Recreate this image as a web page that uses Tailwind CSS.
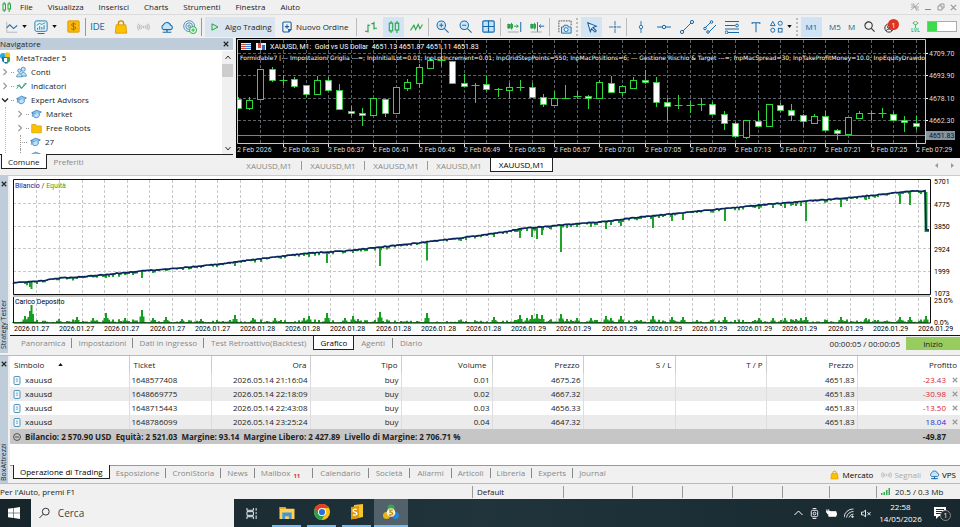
<!DOCTYPE html>
<html lang="it">
<head>
  <meta charset="UTF-8"/>
  <meta name="viewport" content="width=device-width, initial-scale=1.0"/>
  <title>MetaTrader 5</title>
  <script src="https://cdn.jsdelivr.net/npm/@tailwindcss/browser@4"></script>
</head>
<body class="bg-[#f0f0f0] text-[#222] font-['Open_Sans','Noto_Sans',sans-serif] text-[8px] leading-[14px] overflow-hidden">

  <!-- shared icons -->
  <svg class="hidden">
    <symbol id="cap" viewBox="0 0 16 16"><path d="M1 6 8 2.500l7 2.500-6 4z" fill="#8cc5ee" stroke="#1d6fb0"/><path d="M4 8v4c2 2 6 2 8-1V7M2 6v6" fill="#bfe0f7" stroke="#1d6fb0"/></symbol>
    <symbol id="bag" viewBox="0 0 16 16"><path d="M5 6V4a3 3 0 0 1 6 0v2" fill="none" stroke="#c98a00" stroke-width="1.500"/><path d="M2.500 5.500h11l1 9.500h-13z" fill="#fcc200" stroke="#d99a00"/></symbol>
    <symbol id="cloud" viewBox="0 0 16 16"><path d="M4 11a3 3 0 0 1 0-5.500 4.200 4.200 0 0 1 8 .5 2.600 2.600 0 0 1 .5 5z" fill="#c5e4fa" stroke="#1769aa" stroke-width="1.200"/><path d="M8 11v3M3 14h10M6.500 14h3" stroke="#1769aa" stroke-width="1.400"/></symbol>
    <symbol id="waves" viewBox="0 0 16 16"><g fill="none" stroke="#aaa"><circle cx="8" cy="8" r="1"/><path d="M5.500 5.500a4 4 0 0 0 0 5M10.500 5.500a4 4 0 0 1 0 5M3.500 4.500a6 6 0 0 0 0 7M12.500 4.500a6 6 0 0 1 0 7M1.500 3.500a8 8 0 0 0 0 9M14.500 3.500a8 8 0 0 1 0 9"/></g></symbol>
    <symbol id="doc" viewBox="0 0 12 14"><rect x="1.500" y="1" width="9" height="12" rx="1.500" fill="#eef7fc" stroke="#3d87b0" stroke-width="1.300"/><path d="M4.500 5h3M4.500 8h3" stroke="#3d87b0"/></symbol>
    <symbol id="down" viewBox="0 0 6 4"><path d="M0 0h6L3 4z" fill="#111"/></symbol>
    <symbol id="x" viewBox="0 0 8 8"><path d="m1 1 6 6M7 1 1 7" stroke="currentColor" stroke-width="1.500"/></symbol>
    <symbol id="chev" viewBox="0 0 8 8"><path d="m2.500 1 3 3-3 3" fill="none" stroke="#999" stroke-width="1.200"/></symbol>
  </svg>

  <header>
    <nav class="flex h-[15px] items-center border-b border-[#dcdcdc] pr-[3px]">
      <svg class="ml-[2px] mr-2 h-[10px] w-[10px]" viewBox="0 0 10 10" fill="none" stroke="#25a53c"><rect x="1" y="2" width="2.500" height="6"/><rect x="6" y="2" width="2.500" height="5"/><path d="M2.200 0v2M2.200 8v2M7.200 0v2M7.200 7v3"/></svg>
      <div class="flex gap-[15px]">
        <a href="#">File</a><a href="#">Visualizza</a><a href="#">Inserisci</a><a href="#">Charts</a><a href="#">Strumenti</a><a href="#">Finestra</a><a href="#">Aiuto</a>
      </div>
      <div class="ml-auto flex items-center gap-[5px] text-[#999]">
        <svg class="h-2 w-2" viewBox="0 0 8 8" stroke="#aaa" fill="none"><path d="M0 1l8 6M0 7l8-7M2 0l4 8M0 4h8"/></svg>
        <button aria-label="Riduci"><svg class="h-2 w-2" viewBox="0 0 8 8"><path d="M1 6.500h6" stroke="#888"/></svg></button>
        <button aria-label="Ripristina"><svg class="h-2 w-2" viewBox="0 0 8 8" fill="none" stroke="#999"><path d="M1 3h4v4H1zM3 3V1h4v4H5"/></svg></button>
        <button aria-label="Chiudi"><svg class="h-[7px] w-[7px]"><use href="#x"/></svg></button>
      </div>
    </nav>

    <div class="flex h-[23px] items-center overflow-hidden pl-[6px]">
      <button class="flex w-7 shrink-0 items-center gap-1" aria-label="Grafico"><svg class="h-3 w-3" viewBox="0 0 16 16" fill="none"><path d="M1 1v14h14" stroke="#aaa"/><path d="m1 9 4-4 5 5 5-4" stroke="#2a7ab8" stroke-width="1.500"/></svg><svg class="h-[3px] w-[5px]"><use href="#down"/></svg></button>
      <button class="flex w-7 shrink-0 items-center gap-1" aria-label="Modelli"><svg class="h-[14px] w-[14px]" viewBox="0 0 16 16" fill="none" stroke="#1d6fa8"><rect x="1" y="1" width="14" height="12" rx="2" fill="#e3f1fa"/><path d="M4 15.500h8" stroke-width="1.300"/><path d="m3 6 3-2 3 1 4-2" stroke="#2fa35a"/><path d="M4 11V9M6.500 11V7M9 11V8M11.500 11V6"/></svg><svg class="h-[3px] w-[5px]"><use href="#down"/></svg></button>
      <button class="flex w-[23px] shrink-0 justify-center" aria-label="Simboli"><svg class="h-[13px] w-[13px]" viewBox="0 0 16 16"><rect x="1" y="1" width="14" height="14" rx="1" fill="#fbb90b" stroke="#d99400"/><path d="M11 5.500C10 4 5.500 4 5.500 6S11 8 11 10s-4.500 2.200-6 .5M8 3v10" fill="none" stroke="#a86a00" stroke-width="1.200"/></svg></button>
      <span class="h-[18px] w-px shrink-0 bg-[#999]"></span>
      <button class="w-[23px] shrink-0 text-center font-['Lato',sans-serif] text-[9px] text-[#1d6fa8]">IDE</button>
      <button class="flex w-[23px] shrink-0 justify-center" aria-label="Mercato"><svg class="h-[14px] w-[14px]"><use href="#bag"/></svg></button>
      <button class="flex w-[23px] shrink-0 justify-center" aria-label="Segnali"><svg class="h-3 w-[13px]"><use href="#waves"/></svg></button>
      <button class="flex w-[23px] shrink-0 justify-center" aria-label="VPS"><svg class="h-[14px] w-[14px]"><use href="#cloud"/></svg></button>
      <button class="flex w-[23px] shrink-0 justify-center" aria-label="Copy trading"><svg class="h-[14px] w-[14px]" viewBox="0 0 16 16" fill="none" stroke="#3a86b8"><circle cx="7" cy="7" r="6.200"/><circle cx="7" cy="7" r="3.800"/><circle cx="7" cy="7" r="1.400"/><circle cx="11.500" cy="11.500" r="4" fill="#e8fae9" stroke="#1ca63a"/><path d="M11.500 9.500v4M9.500 11.500h4" stroke="#1ca63a"/></svg></button>
      <span class="mr-[3px] h-[18px] w-px shrink-0 bg-[#999]"></span>
      <button class="flex h-5 w-[70px] shrink-0 items-center gap-[6px] bg-[#dbe5ef] pl-[6px]"><svg class="h-[8px] w-[8px]" viewBox="0 0 8 8"><path d="M1 .8 7 4 1 7.200z" fill="none" stroke="#1fa53a"/></svg>Algo Trading</button>
      <button class="flex w-[81px] shrink-0 items-center gap-1 whitespace-nowrap pl-[7px]"><svg class="h-[12px] w-[10px] shrink-0" viewBox="0 0 12 14" fill="none" stroke="#1b5f9e" stroke-width="1.300"><path d="M1 2.500h0A1.500 1.500 0 0 1 2.500 1h7A1.500 1.500 0 0 1 11 2.500V10l-3 3H2.500A1.500 1.500 0 0 1 1 11.500zM11 10H8v3M6 4v5M3.500 6.500h5"/></svg>Nuovo Ordine</button>
      <span class="mr-[2px] h-[18px] w-px shrink-0 bg-[#bbb]"></span>
      <button class="flex w-[23px] shrink-0 justify-center" aria-label="Barre"><svg class="h-3 w-3" viewBox="0 0 14 14" fill="none" stroke="#1fa045" stroke-width="1.300"><path d="M3.500 4v9.500M0 12h3.500M3.500 5H6M10.500 1v9M7.500 3h3M10.500 8.500H14"/></svg></button>
      <button class="flex h-5 w-[21px] mx-px shrink-0 items-center justify-center bg-[#d3e4f2]" aria-label="Candele"><svg class="h-3 w-3" viewBox="0 0 14 14" fill="none" stroke="#1fa045" stroke-width="1.200"><rect x="1.500" y="2.500" width="4" height="9"/><rect x="8.500" y="2.500" width="4" height="8"/><path d="M3.500 0v2.500M3.500 11.500V14M10.500 0v2.500M10.500 10.500V14"/></svg></button>
      <button class="flex w-[23px] shrink-0 justify-center" aria-label="Linea"><svg class="h-3 w-[13px]" viewBox="0 0 14 14" fill="none" stroke="#2da84e" stroke-width="1.300"><path d="m0 11 4-6 2 5 3-6 2 5 3-5"/></svg></button>
      <span class="mr-[2px] h-[18px] w-px shrink-0 bg-[#bbb]"></span>
      <button class="flex w-[23px] shrink-0 justify-center" aria-label="Ingrandisci"><svg class="h-[13px] w-[13px]" viewBox="0 0 16 16" fill="#cfe8f9" stroke="#1d6fa8" stroke-width="1.300"><circle cx="6.500" cy="6.500" r="5.200"/><path d="m10.500 10.500 5 5M6.500 4v5M4 6.500h5"/></svg></button>
      <button class="flex w-[23px] shrink-0 justify-center" aria-label="Riduci zoom"><svg class="h-[13px] w-[13px]" viewBox="0 0 16 16" fill="#cfe8f9" stroke="#1d6fa8" stroke-width="1.300"><circle cx="6.500" cy="6.500" r="5.200"/><path d="m10.500 10.500 5 5M4 6.500h5"/></svg></button>
      <button class="flex w-[23px] shrink-0 justify-center" aria-label="Affianca"><svg class="h-[13px] w-[13px]" viewBox="0 0 16 16" fill="#c5e4fa" stroke="#1769aa" stroke-width="1.400"><rect x="1" y="1" width="14" height="14" rx="1.500"/><path d="M8 1v14M1 8h14"/></svg></button>
      <span class="mr-[2px] h-[18px] w-px shrink-0 bg-[#bbb]"></span>
      <button class="flex w-[23px] shrink-0 justify-center" aria-label="Scorrimento"><svg class="h-3 w-[15px]" viewBox="0 0 18 14" fill="none" stroke="#1fa045" stroke-width="1.200"><path d="M2 3v6M5.500 2v8"/><rect x="1" y="4" width="2" height="4"/><rect x="4.500" y="4" width="2" height="4"/><path d="M8.500 6h5M11.500 4l2 2-2 2"/><path d="M16.500 1v12" stroke="#1769aa"/><path d="M1 13h13" stroke="#aaa"/></svg></button>
      <button class="flex w-[23px] shrink-0 justify-center" aria-label="Spostamento"><svg class="h-3 w-[15px]" viewBox="0 0 18 14" fill="none" stroke="#1fa045" stroke-width="1.200"><path d="M2 3v6M5.500 2v8"/><rect x="1" y="4" width="2" height="4"/><rect x="4.500" y="4" width="2" height="4"/><path d="M9 1v12"/><path d="M17 6h-6M13 4l-2 2 2 2" stroke="#1769aa"/><path d="M1 13h13" stroke="#aaa"/></svg></button>
      <span class="mr-[3px] h-[18px] w-px shrink-0 bg-[#bbb]"></span>
      <button class="flex w-[23px] shrink-0 justify-center" aria-label="Istantanea"><svg class="h-[14px] w-[14px]" viewBox="0 0 16 16" fill="none"><path d="M1 14V1h14v5" stroke="#444" stroke-dasharray="2 1"/><path d="M4 8h2l1-2h4l1 2h3v7H4z" fill="#c5e4fa" stroke="#1769aa"/><circle cx="9.300" cy="11" r="2.200" fill="#fff" stroke="#1769aa"/></svg></button>
      <span class="mr-[3px] h-[18px] shrink-0 border-l-2 border-dotted border-[#bbb]"></span>
      <button class="flex h-5 w-[21px] mr-px shrink-0 items-center justify-center bg-[#d3e4f2]" aria-label="Cursore"><svg class="h-3 w-3" viewBox="0 0 14 14" fill="#e3f1fa" stroke="#1b5f9e" stroke-width="1.200"><path d="m2 2 10 4-4 1.500 4 4-1.500 1.500-4-4L5 12.500z"/></svg></button>
      <button class="flex w-[23px] shrink-0 justify-center" aria-label="Mirino"><svg class="h-3 w-3" viewBox="0 0 14 14" fill="none" stroke="#1769aa"><path d="M7 0v5M7 9v5M0 7h5M9 7h5"/><circle cx="7" cy="7" r="1"/></svg></button>
      <span class="mr-[2px] h-[18px] w-px shrink-0 bg-[#bbb]"></span>
      <button class="flex w-[23px] shrink-0 justify-center" aria-label="Linea verticale"><svg class="h-3 w-3" viewBox="0 0 14 14" fill="none" stroke="#1769aa"><path d="M7 0v5M7 9v5"/><circle cx="7" cy="7" r="2"/></svg></button>
      <button class="flex w-[23px] shrink-0 justify-center" aria-label="Linea orizzontale"><svg class="h-[14px] w-[14px]" viewBox="0 0 14 14" fill="none" stroke="#1769aa"><path d="M0 7h5M9 7h5"/><circle cx="7" cy="7" r="1.700"/></svg></button>
      <button class="flex w-[23px] shrink-0 justify-center" aria-label="Linea di tendenza"><svg class="h-[14px] w-[14px]" viewBox="0 0 14 14" fill="none" stroke="#1769aa"><path d="m3 11 8-8"/><circle cx="2" cy="12" r="1.600"/><circle cx="12" cy="2" r="1.600"/></svg></button>
      <button class="flex w-[23px] shrink-0 justify-center" aria-label="Canale"><svg class="h-[14px] w-[14px]" viewBox="0 0 14 14" fill="none" stroke="#1769aa"><path d="m2 8 6-6M6 12l7-7"/><circle cx="2" cy="8.500" r="1.300"/><circle cx="8.500" cy="2" r="1.300"/><circle cx="5" cy="12" r="1.300"/></svg></button>
      <button class="flex w-[23px] shrink-0 justify-center" aria-label="Fibonacci"><svg class="h-[14px] w-[15px]" viewBox="0 0 15 14" fill="none" stroke="#1769aa"><path d="M0 1.500h14M0 5.500h10M0 9h14M3 12.500h11"/><circle cx="12" cy="5.500" r="1.400"/><circle cx="1.500" cy="12.300" r="1.400"/></svg></button>
      <button class="flex w-[23px] shrink-0 justify-center" aria-label="Testo"><svg class="h-3 w-3" viewBox="0 0 14 14" fill="none" stroke="#1769aa" stroke-width="1.200"><path d="M2.500 3.500V2h9v1.500M7 2v11"/></svg></button>
      <button class="flex w-[29px] shrink-0 items-center gap-1 pl-[3px]" aria-label="Oggetti"><svg class="h-[13px] w-[13px]" viewBox="0 0 14 14" fill="none" stroke="#1769aa"><path d="M3 1.500 5.500 6h-5z"/><circle cx="11" cy="3.500" r="2.200"/><circle cx="3" cy="11" r="2.200"/><rect x="9" y="9" width="4" height="4"/></svg><svg class="h-[3px] w-[5px]"><use href="#down"/></svg></button>
      <span class="mr-[3px] h-[18px] shrink-0 border-l-2 border-dotted border-[#bbb]"></span>
      <button class="h-5 w-[21px] shrink-0 bg-[#cfe3f4] text-center text-[#1b5f8e]">M1</button>
      <button class="w-[26px] shrink-0 text-center text-[#1b5f8e]">M5</button>
      <button class="w-[8px] shrink-0 text-left text-[#1b5f8e]">M</button>
      <div class="ml-auto flex shrink-0 items-center pr-[3px]">
        <button class="mr-[9px]" aria-label="Cerca"><svg class="h-[11px] w-[11px]" viewBox="0 0 12 12" fill="none" stroke="#333" stroke-width="1.200"><circle cx="5" cy="5" r="4"/><path d="m8 8 3.500 3.500"/></svg></button>
        <button class="relative mr-3 h-[14px] w-[15px]" aria-label="Notifiche">
          <svg class="mt-[3px] h-[10px] w-[10px]" viewBox="0 0 12 12" fill="none" stroke="#333" stroke-width="1.200"><circle cx="6" cy="6" r="5"/><circle cx="6" cy="4.500" r="1.800"/><path d="M2.500 9.500c1-3 6-3 7 0"/></svg>
          <span class="absolute -top-px right-0 h-[11px] w-[11px] rounded-full bg-[#dd3322] text-center leading-[11px] text-white">1</span>
        </button>
        <div class="mr-[7px] flex w-[9px] flex-col items-center text-[5px] leading-[5px] font-bold text-[#3dbb4e]"><svg class="h-[7px] w-[7px]" viewBox="0 0 8 8" fill="none" stroke="#2fb344"><path d="m4 0 3 2.500-3 2-3-2zM4 4v4"/></svg>LVL</div>
        <div class="h-[11px] w-[30px] border border-[#aaa] bg-white"><div class="h-full w-1/3 bg-[#3fd94c]"></div></div>
      </div>
    </div>
  </header>

  <main>
    <section class="flex">
      <aside class="mr-[3px] flex w-[233px] shrink-0 flex-col">
        <div class="flex h-3 items-center justify-between bg-[#bfcddb] pr-1 leading-3">Navigatore<button aria-label="Chiudi"><svg class="h-[6px] w-[6px]"><use href="#x"/></svg></button></div>
        <div class="flex h-[105px] overflow-hidden border-b border-[#222] bg-white pt-px">
          <ul class="flex-1">
            <li class="flex h-[14px] items-center gap-1"><svg class="h-[12px] w-[12px]" viewBox="0 0 12 12"><circle cx="3" cy="4" r="3" fill="#27a9e1"/><circle cx="7.500" cy="3" r="2.700" fill="#f3c21a"/><path d="M2 5h8v3l-4 4-4-3z" fill="#1c6fb3"/><path d="M6 5h4v4l-3 3z" fill="#39a845"/><path d="M4 6h3v4H4z" fill="#fff"/></svg>MetaTrader 5</li>
            <li class="flex h-[14px] items-center"><svg class="ml-px h-2 w-2"><use href="#chev"/></svg><span class="mx-[2px] w-[3px] border-t border-dotted border-[#999]"></span><svg class="mr-1 h-3 w-[11px]" viewBox="0 0 16 16" fill="#c9e5f8" stroke="#1d6fb0"><circle cx="10.500" cy="4" r="3"/><path d="M6 14c0-7 9-7 9 0z"/><circle cx="5" cy="6" r="2.500"/><path d="M1 15c0-6 8-6 8 0z"/></svg>Conti</li>
            <li class="flex h-[14px] items-center"><svg class="ml-px h-2 w-2"><use href="#chev"/></svg><span class="mx-[2px] w-[3px] border-t border-dotted border-[#999]"></span><svg class="mr-1 h-3 w-[11px]" viewBox="0 0 16 16" fill="none" stroke-width="1.300"><path d="m1 12 4-6 3 6 5-8 2 1" stroke="#35a86a"/><path d="m1 8 3-1 3 4 4-2 4-5" stroke="#3d87c0"/></svg>Indicatori</li>
            <li class="flex h-[14px] items-center"><svg class="ml-px h-2 w-2" viewBox="0 0 8 8"><path d="m1 2.500 3 3 3-3" fill="none" stroke="#222" stroke-width="1.300"/></svg><span class="mx-[2px] w-[3px] border-t border-dotted border-[#999]"></span><svg class="mr-1 h-3 w-[11px]"><use href="#cap"/></svg>Expert Advisors</li>
            <li class="ml-[5px] border-l border-dotted border-[#bbb] pl-[9px]">
              <ul>
                <li class="flex h-[14px] items-center"><svg class="ml-px h-2 w-2"><use href="#chev"/></svg><span class="mx-[2px] w-[3px] border-t border-dotted border-[#999]"></span><svg class="mr-1 h-3 w-[11px]"><use href="#cap"/></svg>Market</li>
                <li class="flex h-[14px] items-center"><svg class="ml-px h-2 w-2"><use href="#chev"/></svg><span class="mx-[2px] w-[3px] border-t border-dotted border-[#999]"></span><svg class="mr-1 h-3 w-[11px]" viewBox="0 0 16 16"><path d="M1 3h6l1 2h7v10H1z" fill="#fcc200" stroke="#d99a00"/></svg>Free Robots</li>
                <li class="ml-[5px] flex h-[14px] items-center border-l border-dotted border-[#999]"><span class="ml-px mr-[3px] w-[5px] border-t border-dotted border-[#999]"></span><svg class="mr-1 h-3 w-[11px]"><use href="#cap"/></svg>27</li>
                <li class="ml-[5px] flex h-[14px] items-center border-l border-dotted border-[#999]"><span class="ml-px mr-[3px] w-[5px] border-t border-dotted border-[#999]"></span><svg class="mr-1 h-3 w-[11px]"><use href="#cap"/></svg>28</li>
              </ul>
            </li>
          </ul>
          <div class="flex w-[11px] flex-col items-center bg-[#f0f0f0]">
            <svg class="my-1 h-[5px] w-[6px]" viewBox="0 0 6 5"><path d="m.5 4 2.500-3 2.500 3" fill="none" stroke="#333"/></svg>
            <div class="h-[13px] w-full bg-[#cdcdcd]"></div>
            <svg class="mt-auto mb-[3px] h-[5px] w-[6px]" viewBox="0 0 6 5"><path d="m.5 1 2.500 3 2.500-3" fill="none" stroke="#333"/></svg>
          </div>
        </div>
        <div class="flex items-start">
          <button class="-mt-px ml-px h-[15px] border border-t-0 border-[#222] bg-white px-[6px] leading-[13px]">Comune</button>
          <button class="px-[7px] leading-[14px] text-[#888]">Preferiti</button>
        </div>
      </aside>

      <div class="min-w-0 flex-1">
        <svg id="price-chart" class="block w-full bg-black font-['Roboto',sans-serif] text-[7px]" viewBox="236 38 724 120"></svg>
        <div class="flex h-[17px] items-start pl-px leading-[15px] text-[#888]">
          <button class="w-[64px] text-center">XAUUSD,M1</button><span class="mt-[3px] h-[9px] w-px bg-[#999]"></span>
          <button class="w-[62px] text-center">XAUUSD,M1</button><span class="mt-[3px] h-[9px] w-px bg-[#999]"></span>
          <button class="w-[62px] text-center">XAUUSD,M1</button><span class="mt-[3px] h-[9px] w-px bg-[#999]"></span>
          <button class="w-[62px] text-center">XAUUSD,M1</button>
          <button class="h-[14px] w-[63px] border border-t-0 border-[#222] bg-white text-center leading-[13px] text-black">XAUUSD,M1</button>
          <span class="mt-[5px] mr-[6px] ml-auto flex gap-[11px]"><svg class="h-[5px] w-[4px]" viewBox="0 0 4 5"><path d="M3 0v5L0 2.500z" fill="#999"/></svg><svg class="h-[5px] w-[4px]" viewBox="0 0 4 5"><path d="M1 0v5l3-2.500z" fill="#999"/></svg></span>
        </div>
      </div>
    </section>

    <section class="flex border-t border-[#ccc]">
      <div class="mr-[2px] flex w-2 shrink-0 flex-col items-center justify-between bg-[#bfcddb] pt-[5px] pb-1">
        <button aria-label="Chiudi"><svg class="h-[6px] w-[6px]"><use href="#x"/></svg></button>
        <span class="rotate-180 text-[7px] leading-[8px] whitespace-nowrap [writing-mode:vertical-rl]">Strategy Tester</span>
      </div>
      <div class="min-w-0 flex-1">
        <svg id="tester-chart" class="block w-full bg-white font-['Roboto',sans-serif] text-[7px]" viewBox="10 176 950 160"></svg>
        <div class="flex h-[17px] items-start leading-[14px] text-[#888]">
          <div class="flex items-center pl-[5px]">
            <button class="px-[6px]">Panoramica</button><span class="h-[10px] w-px bg-[#888]"></span>
            <button class="px-[6px]">Impostazioni</button><span class="h-[10px] w-px bg-[#888]"></span>
            <button class="px-[6px]">Dati in ingresso</button><span class="h-[10px] w-px bg-[#888]"></span>
            <button class="px-[7px]">Test Retroattivo(Backtest)</button>
            <button class="-mt-px h-[14px] border border-t-0 border-[#222] bg-white px-[6px] leading-[13px] text-black">Grafico</button>
            <button class="px-[7px]">Agenti</button><span class="h-[10px] w-px bg-[#888]"></span>
            <button class="px-[7px]">Diario</button>
          </div>
          <span class="mt-px ml-auto mr-[6px] text-[#222]">00:00:05 / 00:00:05</span>
          <button class="mt-px h-[13px] w-[54px] bg-[#99cc5f] text-center leading-[12px] text-[#222]">Inizio</button>
        </div>
      </div>
    </section>

    <section class="mt-[2px] flex border-t border-[#bbb]">
      <div class="mr-[2px] flex w-2 shrink-0 flex-col items-center justify-between bg-[#bfcddb] pt-[5px] pb-[2px]">
        <button aria-label="Chiudi"><svg class="h-[6px] w-[6px]"><use href="#x"/></svg></button>
        <span class="rotate-180 text-[7px] leading-[8px] whitespace-nowrap [writing-mode:vertical-rl]">BoxAttrezzi</span>
      </div>
      <div class="min-w-0 flex-1">
        <div class="bg-white pb-[21px]">
          <table class="w-full table-fixed text-right">
            <colgroup><col class="w-[119px]"/><col class="w-[82px]"/><col class="w-[99px]"/><col class="w-[91px]"/><col class="w-[91px]"/><col class="w-[91px]"/><col class="w-[92px]"/><col class="w-[91px]"/><col class="w-[91px]"/><col/></colgroup>
            <thead>
              <tr class="h-[17px] [&>th]:border-r [&>th]:border-[#ccc] [&>th]:pr-[3px] [&>th]:font-normal">
                <th class="pl-1 text-left"><span class="flex items-center gap-[14px]">Simbolo<svg class="h-[3px] w-[5px] rotate-180"><use href="#down"/></svg></span></th>
                <th class="pl-1 text-left">Ticket</th><th>Ora</th><th>Tipo</th><th><span class="mr-[2px]">Volume</span></th><th>Prezzo</th><th>S / L</th><th>T / P</th><th>Prezzo</th><th class="border-r-0!">Profitto</th>
              </tr>
            </thead>
            <tbody id="positions"></tbody>
            <tfoot>
              <tr class="h-[15px] bg-[#c6c6c6] font-bold text-[#222]">
                <td colspan="9" class="pl-[3px] text-left"><span class="flex items-center whitespace-pre"><svg class="mr-1 h-2 w-2" viewBox="0 0 10 10" fill="none" stroke="#333"><circle cx="5" cy="5" r="4.300"/><path d="M2.500 5h5"/></svg>Bilancio: 2 570.90 USD  Equità: 2 521.03  Margine: 93.14  Margine Libero: 2 427.89  Livello di Margine: 2 706.71 %</span></td>
                <td class="pr-[14px]">-49.87</td>
              </tr>
            </tfoot>
          </table>
        </div>
        <div class="flex h-[18px] items-start border-t border-[#999] leading-[13px] text-[#888]">
          <div class="ml-[3px] flex items-center">
            <button class="-mt-px h-[14px] border border-t-0 border-[#222] bg-white px-[6px] leading-[12px] text-black">Operazione di Trading</button>
            <button class="px-[6px]">Esposizione</button><span class="h-[10px] w-px bg-[#888]"></span>
            <button class="px-[6px]">CroniStoria</button><span class="h-[10px] w-px bg-[#888]"></span>
            <button class="px-[6px]">News</button><span class="h-[10px] w-px bg-[#888]"></span>
            <button class="pr-3 pl-[6px]">Mailbox<sub class="ml-[3px] text-[6px] leading-none font-bold text-[#d0333a]">11</sub></button><span class="h-[10px] w-px bg-[#888]"></span>
            <button class="px-[7px]">Calendario</button><span class="h-[10px] w-px bg-[#888]"></span>
            <button class="px-[7px]">Società</button><span class="h-[10px] w-px bg-[#888]"></span>
            <button class="px-[7px]">Allarmi</button><span class="h-[10px] w-px bg-[#888]"></span>
            <button class="px-[6px]">Articoli</button><span class="h-[10px] w-px bg-[#888]"></span>
            <button class="px-[6px]">Libreria</button><span class="h-[10px] w-px bg-[#888]"></span>
            <button class="px-[6px]">Experts</button><span class="h-[10px] w-px bg-[#888]"></span>
            <button class="px-[6px]">Journal</button>
          </div>
          <div class="mt-[2px] mr-1 ml-auto flex items-center gap-[8px] text-black">
            <button class="flex items-center gap-1"><svg class="h-[10px] w-[9px]"><use href="#bag"/></svg>Mercato</button>
            <button class="flex items-center gap-[2px] text-[#aaa]"><svg class="h-[10px] w-[11px]"><use href="#waves"/></svg>Segnali</button>
            <button class="flex items-center gap-[2px]"><svg class="h-[11px] w-[11px]"><use href="#cloud"/></svg>VPS</button>
          </div>
        </div>
      </div>
    </section>
  </main>

  <footer>
    <div class="flex h-4 items-center border-t border-[#bbb] [&>span]:h-3 [&>span]:border-l [&>span]:border-[#999] [&>span]:leading-3">
      <p class="flex-1">Per l'Aiuto, premi F1</p>
      <span class="w-[91px] pl-1">Default</span><span class="w-[69px]"></span><span class="w-[50px]"></span><span class="w-[50px]"></span><span class="w-[50px]"></span><span class="w-[47px]"></span><span class="w-[47px]"></span>
      <span class="flex w-[84px] items-center gap-[5px] pl-1"><svg class="h-[7px] w-[9px]" viewBox="0 0 9 7" fill="#2fae4e"><path d="M0 5h1.500v2H0zM2.500 4H4v3H2.500zM5 2h1.500v5H5zM7.500 0H9v7H7.500z"/></svg>20.5 / 0.3 Mb</span>
    </div>

    <div class="flex h-7 items-center bg-linear-to-r from-[#17252b] via-[#20343c] to-[#18282e] text-white">
      <button class="flex w-[31px] justify-center" aria-label="Start"><svg class="-ml-1 h-3 w-3" viewBox="0 0 12 12" fill="#fff"><path d="M0 1.700 5.500 1v4.700H0zM6 .9 12 0v5.700H6zM0 6.300h5.500V11L0 10.300zM6 6.300h6V12l-6-.9z"/></svg></button>
      <label class="flex h-full w-[203px] items-center gap-2 bg-[#f1f1f1] pl-2 text-[#333]">
        <svg class="h-3 w-3" viewBox="0 0 12 12" fill="none" stroke="#222"><circle cx="7.500" cy="4.500" r="3.800"/><path d="m4.800 7.200-4.300 4.300"/></svg>
        <input class="w-full bg-transparent text-[10px] outline-none placeholder:text-[#444]" type="text" placeholder="Cerca" aria-label="Cerca"/>
      </label>
      <button class="flex h-full w-[35px] items-center justify-center" aria-label="Visualizzazione attività"><svg class="h-[11px] w-[12px]" viewBox="0 0 12 12" fill="none" stroke="#fff"><path d="M.5 0v2.500h7V0M.5 12V9.500h7V12M.5 4h7v4h-7zM10.500 0v3M10.500 4.500v2M10.500 8v4"/></svg></button>
      <button class="flex h-full w-[35px] justify-center px-[3px]" aria-label="Esplora file"><span class="flex h-full w-full items-center justify-center border-b-2 border-[#76b9ed]"><svg class="h-[15px] w-4" viewBox="0 0 16 16"><path d="M0 2h6l1.500 2H16v11H0z" fill="#ffd257"/><path d="M0 2h6l1 2H0z" fill="#e8a317"/><path d="M3 8h10v7h-3v-3H6v3H3z" fill="#3f97dc"/></svg></span></button>
      <button class="flex h-full w-[35px] justify-center px-[3px]" aria-label="Chrome"><span class="flex h-full w-full items-center justify-center border-b-2 border-[#76b9ed]"><svg class="h-4 w-4" viewBox="0 0 16 16"><circle cx="8" cy="8" r="8" fill="#fbc116"/><path d="M1.100 4A8 8 0 0 0 7.500 16L11.500 10 8 8z" fill="#2aa14a"/><path d="M1.100 4A8 8 0 0 1 14.900 4H8L4.500 10z" fill="#e33b2e"/><circle cx="8" cy="8" r="4" fill="#fff"/><circle cx="8" cy="8" r="3.100" fill="#2a6fdb"/></svg></span></button>
      <button class="flex h-full w-[35px] justify-center px-[3px]" aria-label="Editor"><span class="flex h-full w-full items-center justify-center border-b-2 border-[#76b9ed]"><svg class="h-4 w-[14px]" viewBox="0 0 14 16"><path d="M4 1 13 0v13l-9 2z" fill="#f7c52c"/><path d="m1 3 8-1v12l-8 1.500z" fill="#e09a10"/><path d="M7 5.500C5 4.800 3 5.300 3 6.800s4 1 4 2.700-2.500 2-4 1.200" fill="none" stroke="#fff" stroke-width="1.200"/></svg></span></button>
      <button class="flex h-full w-[34px] items-center justify-center border-b-2 border-[#76b9ed] bg-[#52616a]" aria-label="MetaTrader 5"><svg class="h-4 w-4" viewBox="0 0 16 16"><circle cx="8" cy="4" r="3.500" fill="#3aa655"/><circle cx="3.500" cy="11.500" r="3.500" fill="#e7b416"/><circle cx="12.500" cy="11.500" r="3.500" fill="#2a86d1"/><circle cx="8" cy="8.500" r="4.300" fill="#f4f1dc"/><path d="M9.800 6.200H7v2c3-.5 3.500 2.600.6 2.800H6" fill="none" stroke="#c98a00" stroke-width="1.300"/></svg></button>
      <div class="ml-auto flex items-center gap-[7px]">
        <svg class="h-[6px] w-[9px]" viewBox="0 0 9 6" fill="none" stroke="#fff"><path d="m.5 5 4-4 4 4"/></svg>
        <svg class="h-[11px] w-[9px]" viewBox="0 0 9 12" fill="none" stroke="#fff"><rect x="1" y="2.500" width="7" height="7" rx="1.500"/><circle cx="4.500" cy="6" r="1.500"/><path d="M2.500.5h4M2.500 11.500h4"/></svg>
        <svg class="h-[9px] w-[11px]" viewBox="0 0 12 9"><path d="M3 2.500h8v5H3z" fill="#fff" stroke="#fff"/><path d="M1 0v2M3 0v2M0 2h4v2L2 5z" fill="#fff" stroke="#fff"/><path d="M11.500 4v2" stroke="#fff"/></svg>
        <svg class="h-[10px] w-[10px]" viewBox="0 0 10 10" fill="none" stroke="#ddd"><path d="M0 9.500A9 9 0 0 1 9.500 1M2.500 9.500A7 7 0 0 1 9.500 3.500M5 9.500a5 5 0 0 1 4.500-3.500"/><circle cx="8.500" cy="8.700" r=".8" fill="#fff"/></svg>
        <svg class="h-[9px] w-[10px]" viewBox="0 0 11 9" fill="none" stroke="#fff"><path d="M.5 3h2L5 .8v7.400L2.500 6h-2zM7 3l3.500 3.500M10.500 3 7 6.500"/></svg>
        <div class="w-[45px] text-center leading-3"><p>22:58</p><p>14/05/2026</p></div>
        <button class="relative mr-[9px] ml-1 h-4 w-[17px]" aria-label="Centro notifiche">
          <svg class="h-3 w-3" viewBox="0 0 12 12"><path d="M0 0h12v9H5l-3 3V9H0z" fill="#fff"/><path d="M2 2.500h8M2 4.500h8M2 6.500h5" stroke="#1b2b31"/></svg>
          <span class="absolute right-0 bottom-0 h-[11px] w-[11px] rounded-full border border-[#888] bg-[#1b2b31] text-center text-[7px] leading-[9px]">1</span>
        </button>
      </div>
    </div>
  </footer>

  <script>
  // open positions
  const positions = [
    ['1648577408', '2026.05.14 21:16:04', '0.01', '4675.26', '4651.83', '-23.43'],
    ['1648669775', '2026.05.14 22:18:09', '0.02', '4667.32', '4651.83', '-30.98'],
    ['1648715443', '2026.05.14 22:43:08', '0.03', '4656.33', '4651.83', '-13.50'],
    ['1648786099', '2026.05.14 23:25:24', '0.04', '4647.32', '4651.83', '18.04']
  ];

  positions.forEach(([ticket, time, volume, open, price, profit]) => {
    const color = profit.startsWith('-') ? 'text-[#d9262b]' : 'text-[#2a2ad0]';
    document.getElementById('positions').innerHTML += `
      <tr class="h-[14px] even:bg-[#ebebeb] [&>td]:border-r [&>td]:border-[#ddd] [&>td]:pr-[2px]">
        <td class="pl-[3px] text-left"><span class="flex items-center gap-1"><svg class="h-[11px] w-2"><use href="#doc"/></svg>xauusd</span></td>
        <td class="pl-[2px] text-left">${ticket}</td>
        <td>${time}</td>
        <td>buy</td>
        <td>${volume}</td>
        <td>${open}</td>
        <td></td>
        <td></td>
        <td>${price}</td>
        <td class="border-r-0!"><span class="flex items-center justify-end gap-[6px] ${color}">${profit}<button class="text-[#999]" aria-label="Chiudi"><svg class="h-[6px] w-[6px]"><use href="#x"/></svg></button></span></td>
      </tr>`;
  });

  // candles: type (f = bear, h = bull, d = doji), body top, body bottom, wick top, wick bottom
  const candles = [
    ['f',99,108,97,109],['h',100,108,97,110],['h',69,99,69,99],['f',69,80,67,82],['d',80,80,75,85],['f',79,86,77,88],['f',85,94,85,97],['h',80,94,76,95],
    ['f',80,90,77,91],['f',90,109,84,110],['f',111,113,106,116],['f',113,115,108,126],['h',98,115,98,116],['f',99,113,99,117],['h',87,113,87,113],['h',82,88,79,91],
    ['h',67,83,64,88],['h',60,68,58,68],['d',60,60,48,66],['f',61,83,61,84],['f',83,86,74,87],['d',85,85,83,103],['f',84,89,76,91],['d',89,89,88,97],
    ['h',87,90,83,99],['d',87,87,80,91],['f',87,97,83,98],['f',97,104,94,107],['h',98,105,91,105],['d',98,98,85,98],['d',96,96,91,99],['f',96,98,95,109],
    ['h',82,98,80,99],['f',83,92,76,93],['h',86,92,85,96],['h',80,88,77,89],['f',80,82,70,84],['f',82,102,77,107],['f',102,106,98,121],['d',105,105,95,109],
    ['d',105,105,101,113],['d',104,104,98,111],['f',104,114,102,115],['f',114,123,111,130],['f',123,136,122,138],['h',120,137,120,139],['f',121,126,111,127],['h',104,126,104,127],
    ['f',105,110,103,112],['f',110,115,104,121],['f',115,121,114,127],['h',116,123,114,124],['f',116,130,111,132],['f',130,133,129,140],['h',117,134,117,134],['h',113,118,111,119],
    ['d',113,113,111,120],['d',113,113,108,118],['f',114,120,112,121],['f',120,122,116,132],['f',123,126,116,130]
  ];

  let p = '<clipPath id="plot"><rect x="238" y="39" width="687" height="105"/></clipPath>';
  for (let i = 0; i < 30; i++) {
    const x = Math.round(260.3 + i * 22.6) + 0.5;
    p += `<path d="M${x} 40V143" stroke="#727b84" stroke-width=".8" stroke-dasharray="3 2"/>`;
  }
  [[53, '4709.70'], [75, '4693.90'], [98, '4678.10'], [120, '4662.30']].forEach(([y, label]) => {
    p += `<path d="M238 ${y + 0.5}H925" stroke="#727b84" stroke-width=".8" stroke-dasharray="3 2"/>`;
    p += `<path d="M925 ${y + 0.5}h3" stroke="#fff"/><text x="929" y="${y + 3}" fill="#ddd">${label}</text>`;
  });
  p += '<path d="M238 135.500H925" stroke="#76828e"/>';
  p += '<g clip-path="url(#plot)">';
  candles.forEach(([type, top, bottom, high, low], i) => {
    const x = Math.round(237.7 + i * 11.3) + 0.5;
    p += `<path d="M${x} ${high}V${low}" stroke="#2fd83a"/>`;
    if (type === 'd') p += `<path d="M${x - 4} ${top + 0.5}h8" stroke="#2fd83a"/>`;
    else p += `<rect x="${x - 3}" y="${top + 0.5}" width="6" height="${bottom - top}" fill="${type === 'f' ? '#fff' : '#000'}" stroke="#2fd83a" stroke-width="${type === 'f' ? 0.8 : 1}"/>`;
  });
  p += '</g>';
  p += '<path d="M237.500 143.500V39.500H925.500V143.500z" fill="none" stroke="#c8c8c8"/>';
  p += '<rect x="926" y="131" width="29" height="9" fill="#8494a5"/><text x="929" y="138" fill="#111">4651.83</text>';
  p += '<rect x="241" y="43" width="10" height="7" fill="#e8eef4"/><path d="M241 44.500h5M241 46.500h5M241 48.500h5" stroke="#d94a3a"/><path d="M246 44.500h5M246 46.500h5M246 48.500h5" stroke="#3d7fd0"/>';
  p += '<rect x="256" y="43" width="10" height="7" fill="#e8eef4"/><path d="M258 43v5h3v-5" fill="#d94a3a"/><path d="M262 50v-5h3v5" fill="#2f6fc0"/>';
  p += '<text x="270" y="49" fill="#fff" class="whitespace-pre">XAUUSD, M1:  Gold vs US Dollar  4651.13 4651.87 4651.11 4651.83</text>';
  p += `<g clip-path="url(#plot)"><text x="240" y="60" fill="#fff" class="text-[6px] font-['DejaVu_Sans',sans-serif]">Formidable7 [--- Impostazioni Griglia ---=; InpInitialLot=0.01; InpLotIncrement=0.01; InpGridStepPoints=550; InpMacPositions=6; --- Gestione Rischio &amp; Target ---=; InpMacSpread=30; InpTakeProfitMoney=10.0; InpEquityDrawdown</text></g>`;
  p += '<text x="237" y="152" fill="#ddd">2 Feb 2026</text>';
  for (let k = 0; k < 15; k++) {
    const min = 33 + k * 4;
    const time = (min < 60 ? '06:' : '07:') + String(min % 60).padStart(2, '0');
    const x = Math.round(282.9 + k * 45.2);
    p += `<path d="M${x + 0.5} 144v3" stroke="#ddd"/><text x="${x}" y="152" fill="#ddd">2 Feb ${time}</text>`;
  }
  document.getElementById('price-chart').innerHTML = p;

  // strategy tester: balance, equity drawdowns and deposit load
  const balance = [[13,283],[22,282],[40,281],[60,278],[80,277],[110,274],[142,271],[180,268],[220,264],[250,260],[283,256],[310,253],[345,251],[380,247],[427,242],[460,238],[490,234],[510,231],[520,228.5],[540,227],[560,225],[600,222],[640,217],[680,213],[720,209],[760,205],[800,201.500],[840,198.500],[880,194.500],[900,192],[912,191],[925.500,191]];
  const dips = [[25,284,7],[30,287,12],[31.5,289,18],[59,280,4],[77,279,6],[93,277,5],[106,278,10],[125,275,5],[142,278,13],[153,273,5],[166,271,6],[182,268,4],[201,266,4],[230,264,3],[235,266,8],[253,261,5],[275,258,5],[304,256,5],[309,257,7],[327,263,10],[345,253,5],[353,253,7],[358,251,4],[380,266,11],[427,260.5,10],[466,240,2],[494,237,6],[515,232,3],[520,238,8],[527,231,5],[532,237,8],[537,239,9],[542,235,8],[550,229,3],[561,252,9],[567,228,4],[577,227,5],[591,227,5],[606,229,7],[611,225,5],[621,226,7],[641,219,3],[653,228,7],[672,221,6],[683,220,6],[697,213,3],[725,221,6],[759,209,5],[773,208,5],[785,208,5],[796,206,4],[801,206,5],[806,221,6],[841,207,6],[866,200,5],[878,197,3],[900,204,6],[910,205,6],[926,230,7]];

  const balanceAt = (x) => {
    const i = Math.max(1, balance.findIndex(b => b[0] >= x));
    const [a, b] = [balance[i - 1], balance[i]];
    return a[1] + (b[1] - a[1]) * (x - a[0]) / (b[0] - a[0]);
  };

  let t = '';
  for (let i = 0; i < 40; i++) {
    const x = Math.round(36.4 + i * 22.6) + 0.5;
    if (x < 930) t += `<path d="M${x} 180V293M${x} 298V322" stroke="#c8c8c8" stroke-dasharray="3 2"/>`;
  }
  [203, 226, 248, 271].forEach(y => {
    t += `<path d="M13 ${y + 0.5}H930" stroke="#c8c8c8" stroke-dasharray="3 2"/>`;
  });

  let equity = '', load = '', line = '';
  for (let x = 13; x <= 925; x += 2) {
    const n = Math.abs(Math.sin(x * 12.9898) * 43758.5453) % 1;
    const y = balanceAt(x);
    line += `${x === 13 ? 'M' : 'L'}${x} ${(y + n * 0.8 - 0.4).toFixed(1)}`;
    equity += `M${x} ${y.toFixed(1)}v${(n * n * n * 3 + 0.5).toFixed(1)}`;
    load += `M${x} 323v${-(n * n * n * 3 + 0.8).toFixed(1)}`;
  }
  line += 'L926 230H929';
  dips.forEach(([x, y, h]) => {
    if (x < 925) equity += `M${x} ${balanceAt(x).toFixed(1)}V${y}`;
    load += `M${x} 323v${-h}M${x - 1.5} 323v${-h / 2}M${x + 1.5} 323v${-h / 2}`;
  });
  t += `<path d="${equity}" stroke="#1ea32a" stroke-width="2"/>`;
  t += `<path d="${load}" stroke="#12a01e" stroke-width="2"/>`;
  t += '<path d="M926 192V230.500H929" fill="none" stroke="#1ea32a" stroke-width="3"/>';
  t += `<path d="${line}" fill="none" stroke="#0a2460" stroke-width="1.700"/>`;
  t += '<path d="M13 296H930" stroke="#c4c4c4" stroke-width="2"/>';
  t += '<path d="M13.500 294.500V179.500H930.500V294.500zM13.500 297v26H930.500V297M10 335.500H960" fill="none" stroke="#111"/>';
  [[184, '5701'], [207, '4775'], [229, '3850'], [252, '2924'], [274, '1999'], [296, '1073']].forEach(([y, label]) => {
    t += `<text x="934" y="${y}">${label}</text>`;
  });
  t += '<text x="934" y="303">25.0%</text><text x="934" y="325">0.0%</text>';
  t += '<text x="15" y="188" fill="#14149c">Bilancio <tspan fill="#333">/</tspan> <tspan fill="#1fae2b">Equità</tspan></text><text x="15" y="304">Carico Deposito</text>';
  for (let k = 0; k < 21; k++) {
    const day = k < 5 ? 27 : k < 11 ? 28 : 29;
    t += `<text x="${Math.round(14 + k * 45.2)}" y="331">2026.01.${day}</text>`;
  }
  document.getElementById('tester-chart').innerHTML = t;
  </script>
</body>
</html>
